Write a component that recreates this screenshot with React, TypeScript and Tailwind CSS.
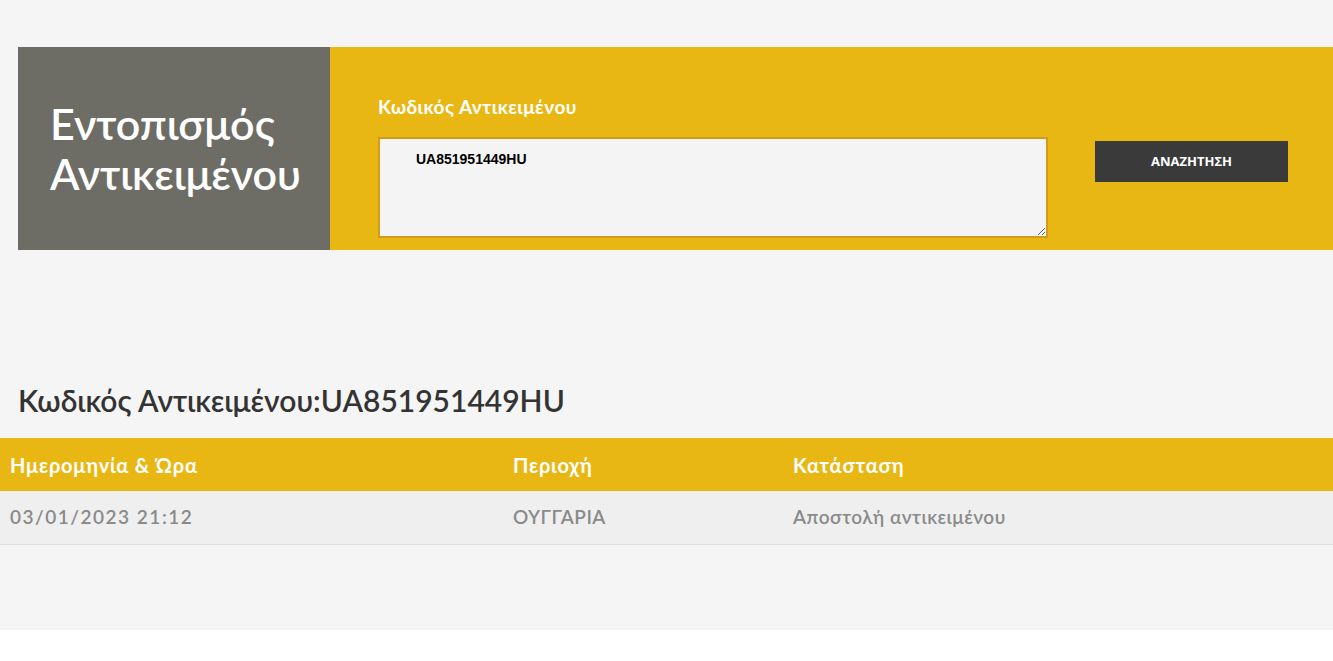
const rows = [
  { date: "03/01/2023 21:12", area: "ΟΥΓΓΑΡΙΑ", status: "Αποστολή αντικειμένου" },
];

const futura = "font-['Lato','Noto_Sans',sans-serif]";

const App = () => {
  return (
    <div className="min-h-screen bg-white">
      <div className={`bg-[#f5f5f5] pt-[47px] pb-[85px] ${futura}`}>
        {/* Search box */}
        <div className="ml-[18px] flex h-[203px]">
          <div className="flex w-[312px] items-center bg-[#6d6d65] pl-[32px]">
            <h1 className="text-[43px] leading-[50px] font-semibold text-white">
              Εντοπισμός
              <br />
              Αντικειμένου
            </h1>
          </div>
          <div className="flex flex-1 bg-[#e9b714] pl-[48px] pt-[50px]">
            <div className="flex w-[670px] flex-col">
              <label className="text-[19px] leading-[20px] font-bold tracking-[0.5px] text-white">Κωδικός Αντικειμένου</label>
              <textarea
                defaultValue="UA851951449HU"
                className="mt-[20px] h-[101px] w-[670px] border-2 border-[#d49a1a] bg-[#f4f4f4] px-[36px] py-[10px] font-['Liberation_Sans',sans-serif] text-[14px] font-bold text-black outline-none"
              />
            </div>
            <div className="ml-[47px] pt-[44px]">
              <button className="h-[41px] w-[193px] bg-[#3a3a3a] font-['Open_Sans',sans-serif] text-[13px] font-bold text-white">
                ΑΝΑΖΗΤΗΣΗ
              </button>
            </div>
          </div>
        </div>

        {/* Results */}
        <h2 className="mt-[133px] ml-[18px] text-[30px] leading-[34px] font-semibold text-[#333]">
          Κωδικός Αντικειμένου:UA851951449HU
        </h2>
        <table className="mt-[21px] w-full border-collapse text-left">
          <thead>
            <tr className="h-[53px] bg-[#e9b714] text-[20px] font-extrabold tracking-[0.8px] text-white">
              <th className="w-[513px] pl-[10px]">Ημερομηνία &amp; Ώρα</th>
              <th className="w-[280px]">Περιοχή</th>
              <th>Κατάσταση</th>
            </tr>
          </thead>
          <tbody>
            {rows.map((r) => (
              <tr key={r.date} className="h-[53px] border-b border-[#dedede] bg-[#efefef] text-[19px] tracking-[0.5px] text-[#8a8a8a]">
                <td className="pl-[10px] font-semibold tracking-[1.5px]">{r.date}</td>
                <td className="font-semibold">{r.area}</td>
                <td className="font-semibold">{r.status}</td>
              </tr>
            ))}
          </tbody>
        </table>
      </div>
    </div>
  );
};

export default App;
